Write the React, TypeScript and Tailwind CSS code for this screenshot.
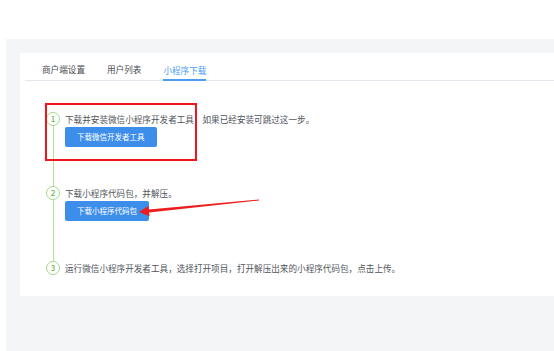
import React from "react";

const font = { fontFamily: '"Noto Sans CJK SC", "Noto Sans", sans-serif' };

function Circle({ n }: { n: number }) {
  return (
    <div className="w-[14px] h-[14px] rounded-full border border-[#a3d88a] bg-white flex items-center justify-center text-[8px] font-medium leading-none text-[#67bd44] shrink-0">
      {n}
    </div>
  );
}

function Step({
  n,
  title,
  button,
  last,
  height,
}: {
  n: number;
  title: string;
  button?: string;
  last?: boolean;
  height?: string;
}) {
  return (
    <div className={`flex ${height ?? ""}`}>
      <div className="flex flex-col items-center w-[14px]">
        <Circle n={n} />
        {!last && <div className="w-px flex-1 bg-[#b3e19d]" />}
      </div>
      <div className="ml-[5px] flex flex-col items-start">
        <div className="text-[8.6px] leading-[14px] text-[#50545a] whitespace-nowrap">{title}</div>
        {button && (
          <div className="mt-[1px] h-[20px] px-[12px] rounded-[2px] bg-[#3d8eea] text-white text-[7.5px] flex items-center whitespace-nowrap">
            {button}
          </div>
        )}
      </div>
    </div>
  );
}

export default function App() {
  return (
    <div className="relative w-[554px] h-[351px] bg-white overflow-hidden flex flex-col" style={font}>
      <div className="h-[39px] shrink-0 bg-white" />
      <div className="flex flex-1">
        <div className="w-[6px] bg-white" />
        <div className="flex-1 bg-[#f4f5f7] pl-[14px] pt-[14px]">
          <div className="bg-white h-[243px] flex flex-col">
            <div className="ml-[5px] border-b border-[#e4e7ed] flex gap-[22px] pl-[17px] h-[28px] items-end">
              <div className="text-[8.6px] leading-[12px] pb-[5px] text-[#4a4d52]">商户端设置</div>
              <div className="text-[8.6px] leading-[12px] pb-[5px] text-[#4a4d52]">用户列表</div>
              <div className="text-[8.6px] leading-[12px] pb-[3px] text-[#4c9cf3] border-b-2 border-[#4c9cf3] -mb-px">小程序下载</div>
            </div>
            <div className="ml-[26px] mt-[31px] flex flex-col">
              <Step n={1} title="下载并安装微信小程序开发者工具，如果已经安装可跳过这一步。" button="下载微信开发者工具" height="h-[74px]" />
              <Step n={2} title="下载小程序代码包，并解压。" button="下载小程序代码包" height="h-[75px]" />
              <Step n={3} title="运行微信小程序开发者工具，选择打开项目，打开解压出来的小程序代码包，点击上传。" last />
            </div>
          </div>
        </div>
      </div>
      <div className="absolute left-[45px] top-[103px] w-[152px] h-[58px] border-2 border-[#f0141e]" />
      <svg className="absolute left-0 top-0" width="554" height="351" viewBox="0 0 554 351">
        <polygon
          points="259,199.6 148.8,209.4 148.4,206 139,212 149.5,216.2 149.1,212.6 259,200.4"
          fill="#ee1c1c"
        />
      </svg>
    </div>
  );
}
